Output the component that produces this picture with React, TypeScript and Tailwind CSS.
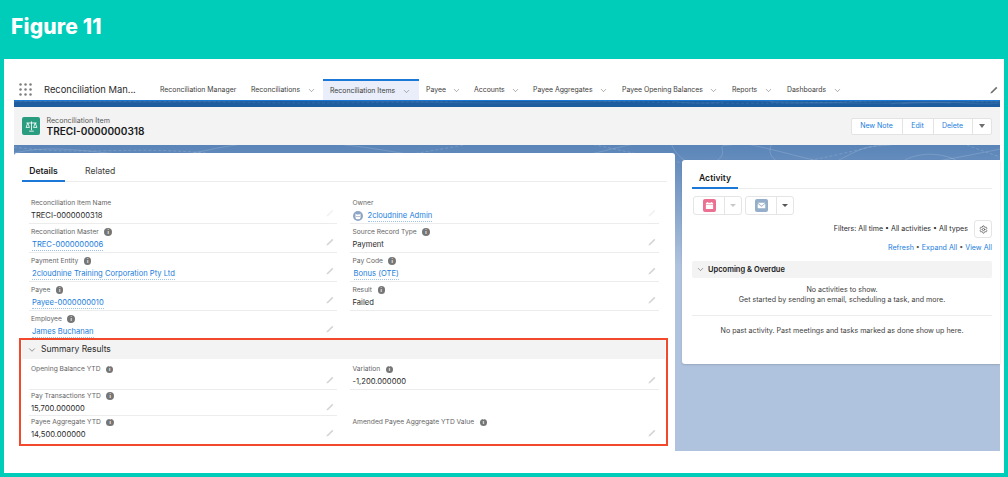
import { ChevronDown, Settings } from "lucide-react";

const navItems = [
  { label: "Reconciliations", w: "w-[72px]" },
  { label: "Reconciliation Items", w: "w-[96px] mr-[7px]", active: true },
  { label: "Payee", w: "w-[48px]" },
  { label: "Accounts", w: "w-[59px]" },
  { label: "Payee Aggregates", w: "w-[89px]" },
  { label: "Payee Opening Balances", w: "w-[110px]" },
  { label: "Reports", w: "w-[55px]" },
  { label: "Dashboards", w: "w-[62px]" },
];

type Field = { label: string; value?: string; link?: boolean; info?: boolean; owner?: boolean; noPencil?: boolean };

const leftFields: Field[] = [
  { label: "Reconciliation Item Name", value: "TRECI-0000000318", noPencil: true },
  { label: "Reconciliation Master", value: "TREC-0000000006", link: true, info: true },
  { label: "Payment Entity", value: "2cloudnine Training Corporation Pty Ltd", link: true, info: true },
  { label: "Payee", value: "Payee-0000000010", link: true, info: true },
  { label: "Employee", value: "James Buchanan", link: true, info: true },
];

const rightFields: Field[] = [
  { label: "Owner", value: "2cloudnine Admin", link: true, owner: true, noPencil: true },
  { label: "Source Record Type", value: "Payment", info: true },
  { label: "Pay Code", value: "Bonus (OTE)", link: true, info: true },
  { label: "Result", value: "Failed", info: true },
];

const summaryLeft: Field[] = [
  { label: "Opening Balance YTD", info: true },
  { label: "Pay Transactions YTD", value: "15,700.000000", info: true },
  { label: "Payee Aggregate YTD", value: "14,500.000000", info: true },
];

const summaryRight: Field[] = [
  { label: "Variation", value: "-1,200.000000", info: true },
  { label: "Amended Payee Aggregate YTD Value", info: true },
];

function Pencil({ className = "" }: { className?: string }) {
  return (
    <svg viewBox="0 0 10 10" className={`h-[8px] w-[8px] shrink-0 ${className}`}>
      <path d="M0.5 9.5 L1.2 7.4 L7.8 1 L9.2 2.4 L2.7 8.8 Z" fill="currentColor" />
    </svg>
  );
}

function InfoDot() {
  return (
    <span className="ml-[5.5px] flex h-[7.5px] w-[7.5px] items-center justify-center rounded-full bg-[#767676] text-[5px] font-bold leading-none text-white">
      i
    </span>
  );
}

function OwnerAvatar() {
  return (
    <svg viewBox="0 0 12 12" className="mr-[4px] h-[10px] w-[10px] shrink-0">
      <circle cx="6" cy="6" r="6" fill="#8ea5c4" />
      <path d="M3 3 L4.4 4.2 H7.6 L9 3 V8 Q9 10 6 10 Q3 10 3 8 Z" fill="#ffffff" />
      <circle cx="4.8" cy="6.6" r="0.6" fill="#4a5f7d" />
      <circle cx="7.2" cy="6.6" r="0.6" fill="#4a5f7d" />
    </svg>
  );
}

function FieldRow({ field, compact }: { field: Field; compact?: boolean }) {
  return (
    <div className={`${compact ? "h-[26.5px] pt-[2.5px]" : "h-[29px] pt-[4.5px]"} border-b border-[#ececec] pl-[2.5px] pr-[3px]`}>
      <div className="flex h-[8px] items-center whitespace-nowrap text-[6.7px] leading-none text-[#666666]">
        {field.label}
        {field.info && <InfoDot />}
      </div>
      <div className={`flex items-center justify-between ${compact ? "mt-[3px]" : "mt-[3.5px]"} h-[11px]`}>
        <div className="flex min-w-0 items-center whitespace-nowrap text-[7.6px] leading-[10px] text-[#2b2b2b]">
          {field.owner && <OwnerAvatar />}
          {field.link ? (
            <span className="ml-[1px] border-b border-dotted border-[#9cc4ea] text-[#1a7edc]">{field.value}</span>
          ) : (
            <span>{field.value}</span>
          )}
        </div>
        <Pencil className={`${compact ? "-mt-[4px]" : "-mt-[6px]"} ${field.noPencil ? "text-[#f1f1f1]" : "text-[#d4d4d4]"}`} />
      </div>
    </div>
  );
}

// contour lines behind the record page
function Topo({ className = "" }: { className?: string }) {
  return (
    <svg viewBox="0 0 990 60" preserveAspectRatio="none" className={`pointer-events-none absolute inset-0 h-full w-full ${className}`}>
      <g fill="none" stroke="#ffffff" strokeOpacity="0.22" strokeWidth="0.7">
        <path d="M0 8 C60 -6 120 22 190 6 S320 -4 400 10 S520 24 600 4 S720 -6 790 12 S900 22 990 4" />
        <path d="M0 2 C70 12 140 -2 220 12 S340 20 440 2 S560 -4 650 14 S780 20 860 2 S950 0 990 12" strokeDasharray="3 2" />
        <path d="M660 0 C670 20 690 26 705 16 S700 0 720 0" />
        <path d="M760 0 C750 22 800 30 830 14 S860 2 880 0" />
        <path d="M880 30 C890 6 930 4 950 18 S980 30 990 20" />
        <path d="M890 30 C898 14 925 12 940 22" />
      </g>
    </svg>
  );
}

function SplitButton({ children, dim }: { children: React.ReactNode; dim?: boolean }) {
  return (
    <div className="flex h-[19px] items-center rounded-[3px] border border-[#e5e5e5] bg-white">
      <div className="flex w-[31px] items-center justify-center self-stretch border-r border-[#e5e5e5]">{children}</div>
      <div className="flex w-[16px] items-center justify-center">
        <span className={`h-0 w-0 border-x-[3px] border-t-[3px] border-x-transparent ${dim ? "border-t-[#c9c9c9]" : "border-t-[#555555]"}`} />
      </div>
    </div>
  );
}

export default function App() {
  return (
    <div className="flex h-[477px] w-[1008px] flex-col overflow-hidden bg-[#00cdb9] font-[Inter,sans-serif]">
      <header className="flex h-[59px] shrink-0 items-center pb-[7px] pl-[11px]">
        <h1 className="text-[21px] font-extrabold leading-none tracking-[0.2px] text-white">Figure 11</h1>
      </header>

      <div className="mx-[4px] h-[414px] bg-white pl-[9.5px] pr-[4px] pt-[20px]">
        {/* app nav */}
        <nav className="flex h-[21px] items-center whitespace-nowrap text-[6.9px] text-[#3e3e3c]">
          <svg viewBox="0 0 13 13" className="ml-[5.5px] h-[13px] w-[13px] shrink-0 text-[#807e7b]" fill="currentColor">
            {[1.5, 6.5, 11.5].map((y) =>
              [1.5, 6.5, 11.5].map((x) => <circle key={`${x}-${y}`} cx={x} cy={y} r="1.25" />)
            )}
          </svg>
          <span className="ml-[12px] w-[116px] shrink-0 pt-[1px] text-[9.4px] text-[#2b2b2b]">Reconciliation Man...</span>
          <span className="w-[91px] shrink-0 pt-[1px]">Reconciliation Manager</span>
          {navItems.map((item) => (
            <div
              key={item.label}
              className={`flex h-full shrink-0 items-center pt-[1px] ${item.w} ${
                item.active ? "border-t-2 border-[#1b78d6] bg-[#e9eefa] pl-[7px]" : ""
              }`}
            >
              <span>{item.label}</span>
              <ChevronDown className="ml-[6.5px] h-[9px] w-[9px] shrink-0 text-[#706e6b]" strokeWidth={1.5} />
            </div>
          ))}
          <Pencil className="ml-auto mr-[2px] text-[#706e6b]" />
        </nav>
        <div className="relative h-[7px] overflow-hidden border-t border-[#1b78d6] bg-[#1d5c9e]">
          <Topo />
        </div>

        {/* highlights */}
        <div className="flex h-[38px] items-center bg-[#f3f3f3] pl-[8.5px] pr-[8.5px]">
          <div className="flex h-[18px] w-[18px] shrink-0 items-center justify-center rounded-[2px] bg-[#2a9d80]">
            <svg viewBox="0 0 14 14" className="h-[13px] w-[13px]" fill="none" stroke="#ffffff" strokeWidth="0.9">
              <path d="M7 1.5 V11 M1.5 3.2 H12.5 M4.5 12 H9.5" />
              <path d="M3 3.2 L1.2 8 H4.8 Z M11 3.2 L9.2 8 H12.8 Z" />
            </svg>
          </div>
          <div className="ml-[6.5px]">
            <div className="pt-[1px] text-[7.1px] leading-[9px] text-[#5a5a5a]">Reconciliation Item</div>
            <div className="text-[10.1px] font-semibold leading-[13px] text-[#1a1a1a]">TRECI-0000000318</div>
          </div>
          <div className="ml-auto flex h-[17px] items-center rounded-[2px] border border-[#e3e3e3] bg-white text-[7px] text-[#1a7edc]">
            <span className="flex h-full w-[51px] items-center justify-center border-r border-[#e3e3e3]">New Note</span>
            <span className="flex h-full w-[31px] items-center justify-center border-r border-[#e3e3e3]">Edit</span>
            <span className="flex h-full w-[39px] items-center justify-center border-r border-[#e3e3e3]">Delete</span>
            <span className="flex h-full w-[18px] items-center justify-center">
              <span className="h-0 w-0 border-x-[3px] border-t-[4px] border-x-transparent border-t-[#706e6b]" />
            </span>
          </div>
        </div>

        {/* record page */}
        <div className="relative flex h-[306px] gap-[7px] bg-gradient-to-b from-[#5a85b8] to-[#b0c3de] to-40% pl-[0.5px] pt-[8px]">
          <Topo className="!h-[60px]" />

          <main className="relative h-[298px] w-[661px] shrink-0 rounded-t-[3px] bg-white">
            <div className="mx-[8px] flex h-[28.5px] items-end border-b border-[#ececec] text-[8.6px]">
              <div className="-mb-px flex h-[19px] w-[43px] items-center justify-center border-b-2 border-[#1b78d6] pt-[1px] font-semibold text-[#1a1a1a]">
                Details
              </div>
              <div className="ml-[20px] flex h-[19px] items-center pt-[1px] text-[#3e3e3c]">Related</div>
            </div>

            <div className="ml-[14.5px] mt-[13px] grid grid-cols-[308.5px_309px] gap-x-[13px]">
              <div>
                {leftFields.map((f, i) => (
                  <div key={f.label} className={i === 4 ? "[&>div]:border-b-0" : ""}>
                    <FieldRow field={f} />
                  </div>
                ))}
              </div>
              <div>
                {rightFields.map((f) => (
                  <FieldRow key={f.label} field={f} />
                ))}
              </div>
            </div>

            {/* highlighted section */}
            <section className="relative ml-[5px] mt-[-1.5px] h-[107.5px] w-[649px] border-2 border-[#f2492c]">
              <div className="mx-[1px] flex h-[18.5px] items-center bg-[#f3f3f3] pl-[5px] pt-[1px] text-[8.5px] text-[#2b2b2b]">
                <ChevronDown className="mr-[4px] h-[10px] w-[10px] text-[#555555]" strokeWidth={1.5} />
                Summary Results
              </div>
              <div className="ml-[7.5px] mt-[4.5px] grid grid-cols-[308.5px_309px] gap-x-[13px]">
                <div>
                  {summaryLeft.map((f, i) => (
                    <div key={f.label} className={i === 2 ? "[&>div]:border-b-0" : ""}>
                      <FieldRow field={f} compact />
                    </div>
                  ))}
                </div>
                <div>
                  <FieldRow field={summaryRight[0]} compact />
                  <div className="h-[26.5px]" />
                  <div className="[&>div]:border-b-0">
                    <FieldRow field={summaryRight[1]} compact />
                  </div>
                </div>
              </div>
            </section>
          </main>

          {/* activity panel */}
          <aside className="relative mt-[7px] h-[204px] w-[318px] shrink-0 rounded-l-[3px] bg-white pl-[10px] pr-[8px] shadow-[0_1px_2px_rgba(0,0,0,0.15)]">
            <div className="flex h-[28.5px] items-end border-b border-[#ececec]">
              <div className="-mb-px flex h-[20px] w-[46px] items-center justify-center border-b-2 border-[#1b78d6] pt-[2px] text-[8.6px] font-semibold text-[#1a1a1a]">
                Activity
              </div>
            </div>
            <div className="mt-[7px] flex gap-[3px] pl-[1px]">
              <SplitButton dim>
                <span className="flex h-[13px] w-[13px] items-center justify-center rounded-[2px] bg-[#eb7092]">
                  <svg viewBox="0 0 10 10" className="h-[9px] w-[9px]" fill="#ffffff">
                    <path d="M1 2 H9 V3.4 H1 Z M1 4 H9 V9 H1 Z M2.4 1 H3.4 V2 H2.4 Z M6.6 1 H7.6 V2 H6.6 Z" />
                  </svg>
                </span>
              </SplitButton>
              <SplitButton>
                <span className="flex h-[13px] w-[13px] items-center justify-center rounded-[2px] bg-[#95aec9]">
                  <svg viewBox="0 0 10 10" className="h-[9px] w-[9px]" fill="#ffffff">
                    <path d="M0.8 2 H9.2 L5 5.4 Z M0.8 3 L5 6.4 L9.2 3 V8 H0.8 Z" />
                  </svg>
                </span>
              </SplitButton>
            </div>
            <div className="mt-[5.5px] flex items-center justify-end text-[7.1px] text-[#2b2b2b]">
              <span className="pt-[1px]">Filters: All time • All activities • All types</span>
              <span className="ml-[6px] flex h-[18px] w-[18px] items-center justify-center rounded-[3px] border border-[#e5e5e5]">
                <Settings className="h-[9px] w-[9px] text-[#555555]" />
              </span>
            </div>
            <div className="mt-[4.5px] text-right text-[7.1px] leading-[10px] text-[#1a7edc]">
              Refresh <span className="text-[#555555]">•</span> Expand All <span className="text-[#555555]">•</span> View All
            </div>
            <div className="mt-[8.5px] flex h-[17px] items-center rounded-[2px] bg-[#f3f3f3] pl-[4px] text-[7.5px] font-semibold text-[#1a1a1a]">
              <ChevronDown className="mr-[3px] h-[9px] w-[9px] text-[#555555]" strokeWidth={1.5} />
              Upcoming &amp; Overdue
            </div>
            <div className="border-b border-[#ececec] pb-[9px] pt-[6.5px] text-center text-[7.1px] leading-[10.5px] text-[#3e3e3c]">
              <p>No activities to show.</p>
              <p>Get started by sending an email, scheduling a task, and more.</p>
            </div>
            <p className="mt-[10px] text-center text-[7.1px] leading-[10px] text-[#3e3e3c]">
              No past activity. Past meetings and tasks marked as done show up here.
            </p>
          </aside>
        </div>
      </div>
    </div>
  );
}
